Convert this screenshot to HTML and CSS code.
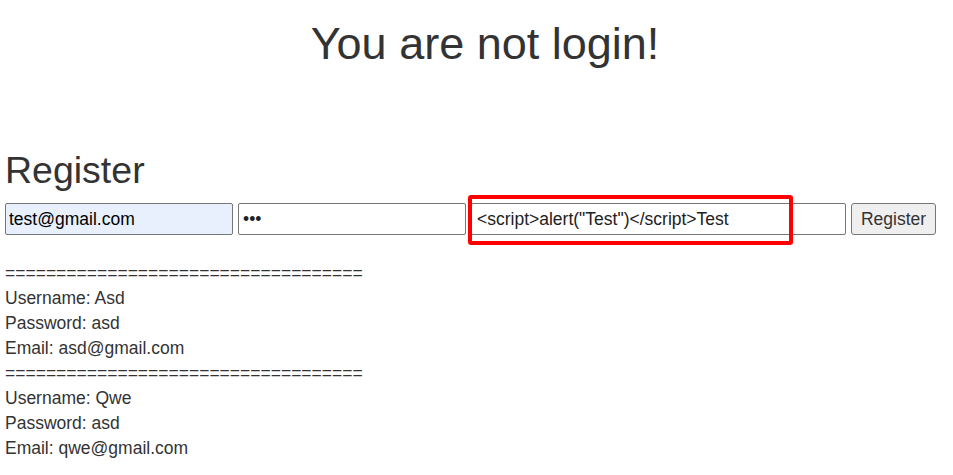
FILE: index.html
```html
<!DOCTYPE html>
<html>
<head>
<meta charset="utf-8">
<title>Register</title>
<link rel="stylesheet" href="styles.css">
</head>
<body>
<h1 class="title">You are not login!</h1>
<div class="content">
  <h2 class="heading">Register</h2>
  <form class="reg-form">
    <input class="field field-email" type="text" value="test@gmail.com">
    <input class="field field-pass" type="password" value="abc">
    <input class="field field-name" type="text" value="<script>alert(&quot;Test&quot;)</script>Test">
    <button class="btn" type="button">Register</button>
    <span class="highlight"></span>
  </form>
  <div class="records">
    <p class="line">===================================</p>
    <p class="line">Username: Asd</p>
    <p class="line">Password: asd</p>
    <p class="line">Email: asd@gmail.com</p>
    <p class="line">===================================</p>
    <p class="line">Username: Qwe</p>
    <p class="line">Password: asd</p>
    <p class="line">Email: qwe@gmail.com</p>
  </div>
</div>
</body>
</html>
```
FILE: styles.css
```css
html, body {
  background: #fff;
}
body {
  margin: 0;
  font-family: "Liberation Sans", Arial, sans-serif;
  font-size: 17.5px;
  line-height: 25px;
  color: #333;
}
.title {
  margin: 19px 0 0;
  padding-left: 17px;
  text-align: center;
  font-size: 45px;
  font-weight: 500;
  line-height: 1.1;
}
.content {
  padding: 0 5px;
}
.heading {
  margin: 81px 0 12.5px;
  font-size: 37.5px;
  font-weight: 500;
  line-height: 1.1;
}
.reg-form {
  position: relative;
  display: flex;
  align-items: center;
  gap: 5px;
  margin: 0;
  height: 32px;
}
.field {
  box-sizing: border-box;
  height: 32px;
  margin: 0;
  padding: 0 3px;
  border: 1px solid #767676;
  border-radius: 2px;
  background: #fff;
  font-family: inherit;
  font-size: 17.5px;
  color: #222;
  outline: none;
}
.field-email {
  width: 228px;
  background: #e8f0fe;
  color: #000;
}
.field-pass {
  width: 228px;
  padding-left: 4px;
}
.field-name {
  width: 375px;
  padding-left: 5px;
}
.btn {
  box-sizing: border-box;
  height: 32px;
  width: 85px;
  margin: 0;
  padding: 0 8px;
  border: 1px solid #767676;
  border-radius: 3px;
  background: #efefef;
  font-family: inherit;
  font-size: 17.5px;
  color: #333;
}
.highlight {
  position: absolute;
  left: 463px;
  top: -8px;
  width: 325px;
  height: 50px;
  box-sizing: border-box;
  border: 4px solid #ff0000;
  border-radius: 3px;
  pointer-events: none;
}
.records {
  margin-top: 26px;
}
.line {
  margin: 0;
}
```
